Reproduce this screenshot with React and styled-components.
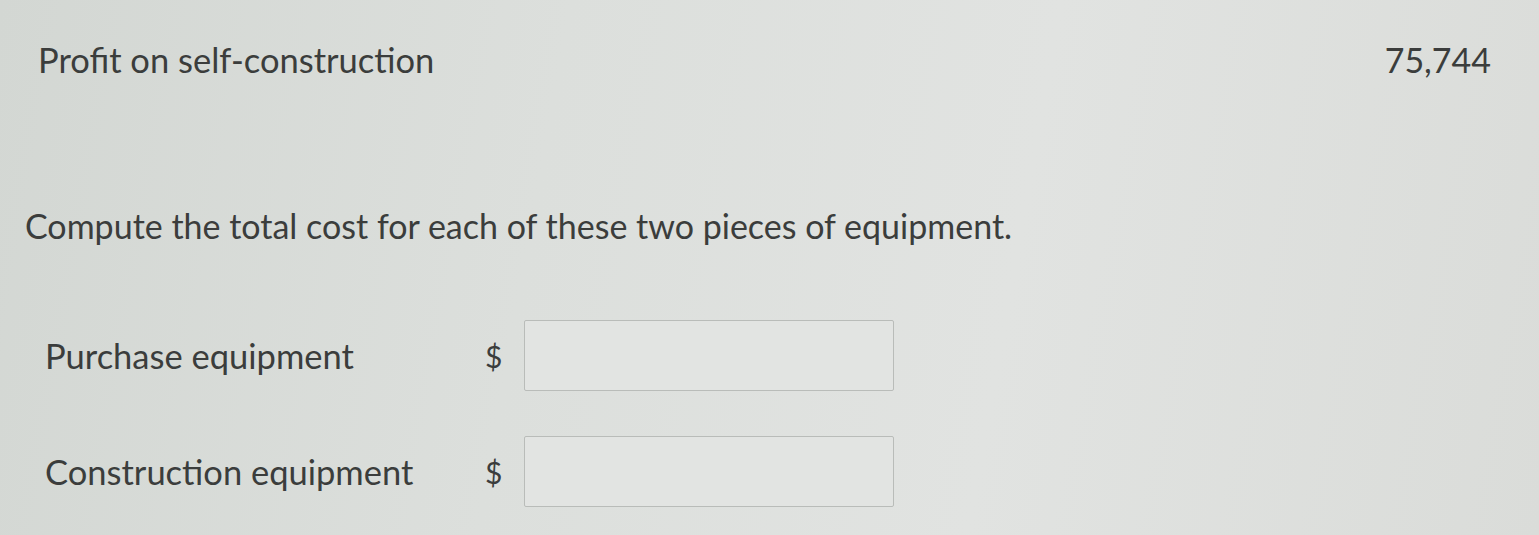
import React from "react";
import styled, { createGlobalStyle } from "styled-components";

const GlobalStyle = createGlobalStyle`
  html, body {
    margin: 0;
    padding: 0;
  }
  body {
    font-family: Lato, "Open Sans", sans-serif;
    color: #3b3d3c;
  }
`;

function App() {
  return (
    <>
      <GlobalStyle />
      <Page>
        <TopRow>
          <RowLabel>Profit on self-construction</RowLabel>
          <Amount>75,744</Amount>
        </TopRow>
        <Prompt>Compute the total cost for each of these two pieces of equipment.</Prompt>
        <Form>
          <Field>
            <FieldLabel>Purchase equipment</FieldLabel>
            <Dollar>$</Dollar>
            <Input />
          </Field>
          <Field>
            <FieldLabel>Construction equipment</FieldLabel>
            <Dollar>$</Dollar>
            <Input />
          </Field>
        </Form>
      </Page>
    </>
  );
}

const Page = styled.div`
  width: 1539px;
  height: 535px;
  box-sizing: border-box;
  overflow: hidden;
  padding: 38px 48px 0 25px;
  background: linear-gradient(
    100deg,
    #d3d7d3 0%,
    #dcdfdc 35%,
    #e1e3e1 65%,
    #dadcd9 100%
  );
`;

const TopRow = styled.div`
  display: flex;
  justify-content: space-between;
  align-items: baseline;
  padding-left: 13px;
`;

const RowLabel = styled.div`
  font-size: 34.5px;
  line-height: 44px;
`;

const Amount = styled.div`
  font-size: 34px;
  line-height: 44px;
`;

const Prompt = styled.div`
  margin-top: 122px;
  font-size: 34px;
  line-height: 44px;
`;

const Form = styled.div`
  margin-top: 72px;
  display: flex;
  flex-direction: column;
  gap: 45px;
  padding-left: 20px;
`;

const Field = styled.div`
  display: grid;
  grid-template-columns: 440px 39px 370px;
  align-items: center;
`;

const FieldLabel = styled.div`
  font-size: 34.5px;
`;

const Dollar = styled.div`
  font-size: 30px;
  text-align: left;
`;

const Input = styled.div`
  height: 69px;
  border: 1px solid #b9bcb9;
  border-radius: 2px;
  background: #e2e4e2;
`;

export default App;
